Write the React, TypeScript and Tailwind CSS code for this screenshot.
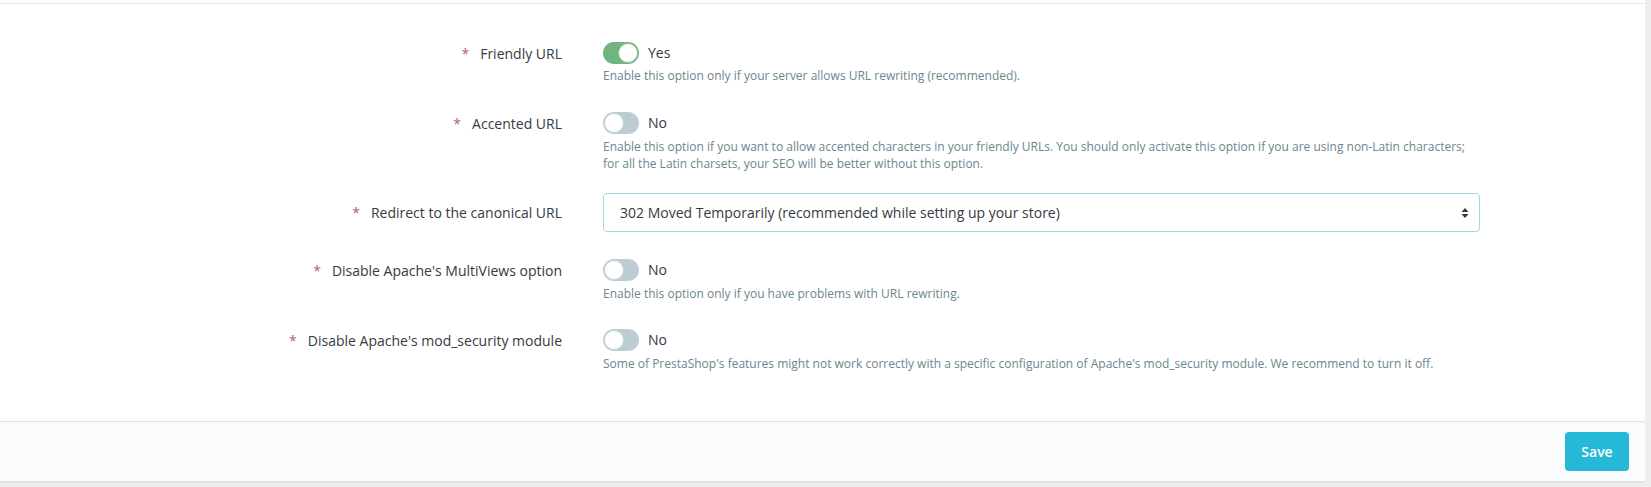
import React from 'react';

function Switch({ on }: { on: boolean }) {
  return (
    <div className="flex items-center">
      <span
        className={
          'relative inline-block h-[22px] w-[36px] rounded-full ' +
          (on ? 'bg-[#70b580]' : 'bg-[#bbcdd2]')
        }
      >
        <span
          className={
            'absolute top-[1px] h-[20px] w-[20px] rounded-full border bg-white ' +
            (on ? 'left-[15px] border-[#8fc49b]' : 'left-[1px] border-[#c8d6da]')
          }
        />
      </span>
      <span className="ml-[9px] text-[14px] leading-[22px] text-[#363a41]">{on ? 'Yes' : 'No'}</span>
    </div>
  );
}

function SelectBox() {
  return (
    <div className="flex h-[39px] w-[877px] items-center justify-between rounded-[4px] border border-[#9fd9e5] bg-white pl-[16px] pr-[10px]">
      <span className="text-[14px] text-[#363a41]">302 Moved Temporarily (recommended while setting up your store)</span>
      <svg width="8" height="12" viewBox="0 0 8 12" className="text-[#363a41]">
        <path d="M4 1 L7.5 5 L0.5 5 Z" fill="currentColor" />
        <path d="M4 11 L7.5 7 L0.5 7 Z" fill="currentColor" />
      </svg>
    </div>
  );
}

function Label({ text, tall }: { text: string; tall?: boolean }) {
  return (
    <div
      className={
        'flex w-[562px] shrink-0 items-center justify-end text-[14px] text-[#363a41] ' +
        (tall ? 'h-[39px]' : 'h-[22px]')
      }
    >
      <span className="mr-[11px] text-[#c05c67]">*</span>
      <span>{text}</span>
    </div>
  );
}

export default function App() {
  return (
    <div className="h-[487px] w-[1651px] overflow-hidden bg-[#eceeef] pr-[6px] font-['Open_Sans',sans-serif]">
      <div className="bg-white pt-[3px]">
        <div className="border-t border-[#dfe9eb] pt-[38px] pb-[48px]">
          {/* Friendly URL */}
          <div className="flex items-start">
            <Label text="Friendly URL" />
            <div className="ml-[41px]">
              <Switch on />
              <p className="mt-[3px] text-[12px] leading-[18px] text-[#6c868e]">
                Enable this option only if your server allows URL rewriting (recommended).
              </p>
            </div>
          </div>

          {/* Accented URL */}
          <div className="mt-[27px] flex items-start">
            <Label text="Accented URL" />
            <div className="ml-[41px]">
              <Switch on={false} />
              <p className="mt-[4px] text-[12px] leading-[17px] text-[#6c868e]">
                Enable this option if you want to allow accented characters in your friendly URLs. You should only activate this option if you are using non-Latin characters;
                <br />
                for all the Latin charsets, your SEO will be better without this option.
              </p>
            </div>
          </div>

          {/* Redirect */}
          <div className="mt-[21px] flex items-start">
            <Label text="Redirect to the canonical URL" tall />
            <div className="ml-[41px]">
              <SelectBox />
            </div>
          </div>

          {/* MultiViews */}
          <div className="mt-[27px] flex items-start">
            <Label text="Disable Apache's MultiViews option" />
            <div className="ml-[41px]">
              <Switch on={false} />
              <p className="mt-[4px] text-[12px] leading-[18px] text-[#6c868e]">
                Enable this option only if you have problems with URL rewriting.
              </p>
            </div>
          </div>

          {/* mod_security */}
          <div className="mt-[26px] flex items-start">
            <Label text="Disable Apache's mod_security module" />
            <div className="ml-[41px]">
              <Switch on={false} />
              <p className="mt-[4px] text-[12px] leading-[18px] text-[#6c868e]">
                Some of PrestaShop's features might not work correctly with a specific configuration of Apache's mod_security module. We recommend to turn it off.
              </p>
            </div>
          </div>
        </div>

        <div className="flex h-[62px] items-center justify-end border-t border-b-2 border-t-[#dde4e7] border-b-[#e0e3e5] bg-[#fafbfc] pr-[16px]">
          <button className="h-[39px] w-[64px] rounded-[4px] bg-[#25b9d7] text-[14px] font-semibold text-white">
            Save
          </button>
        </div>
      </div>
    </div>
  );
}
